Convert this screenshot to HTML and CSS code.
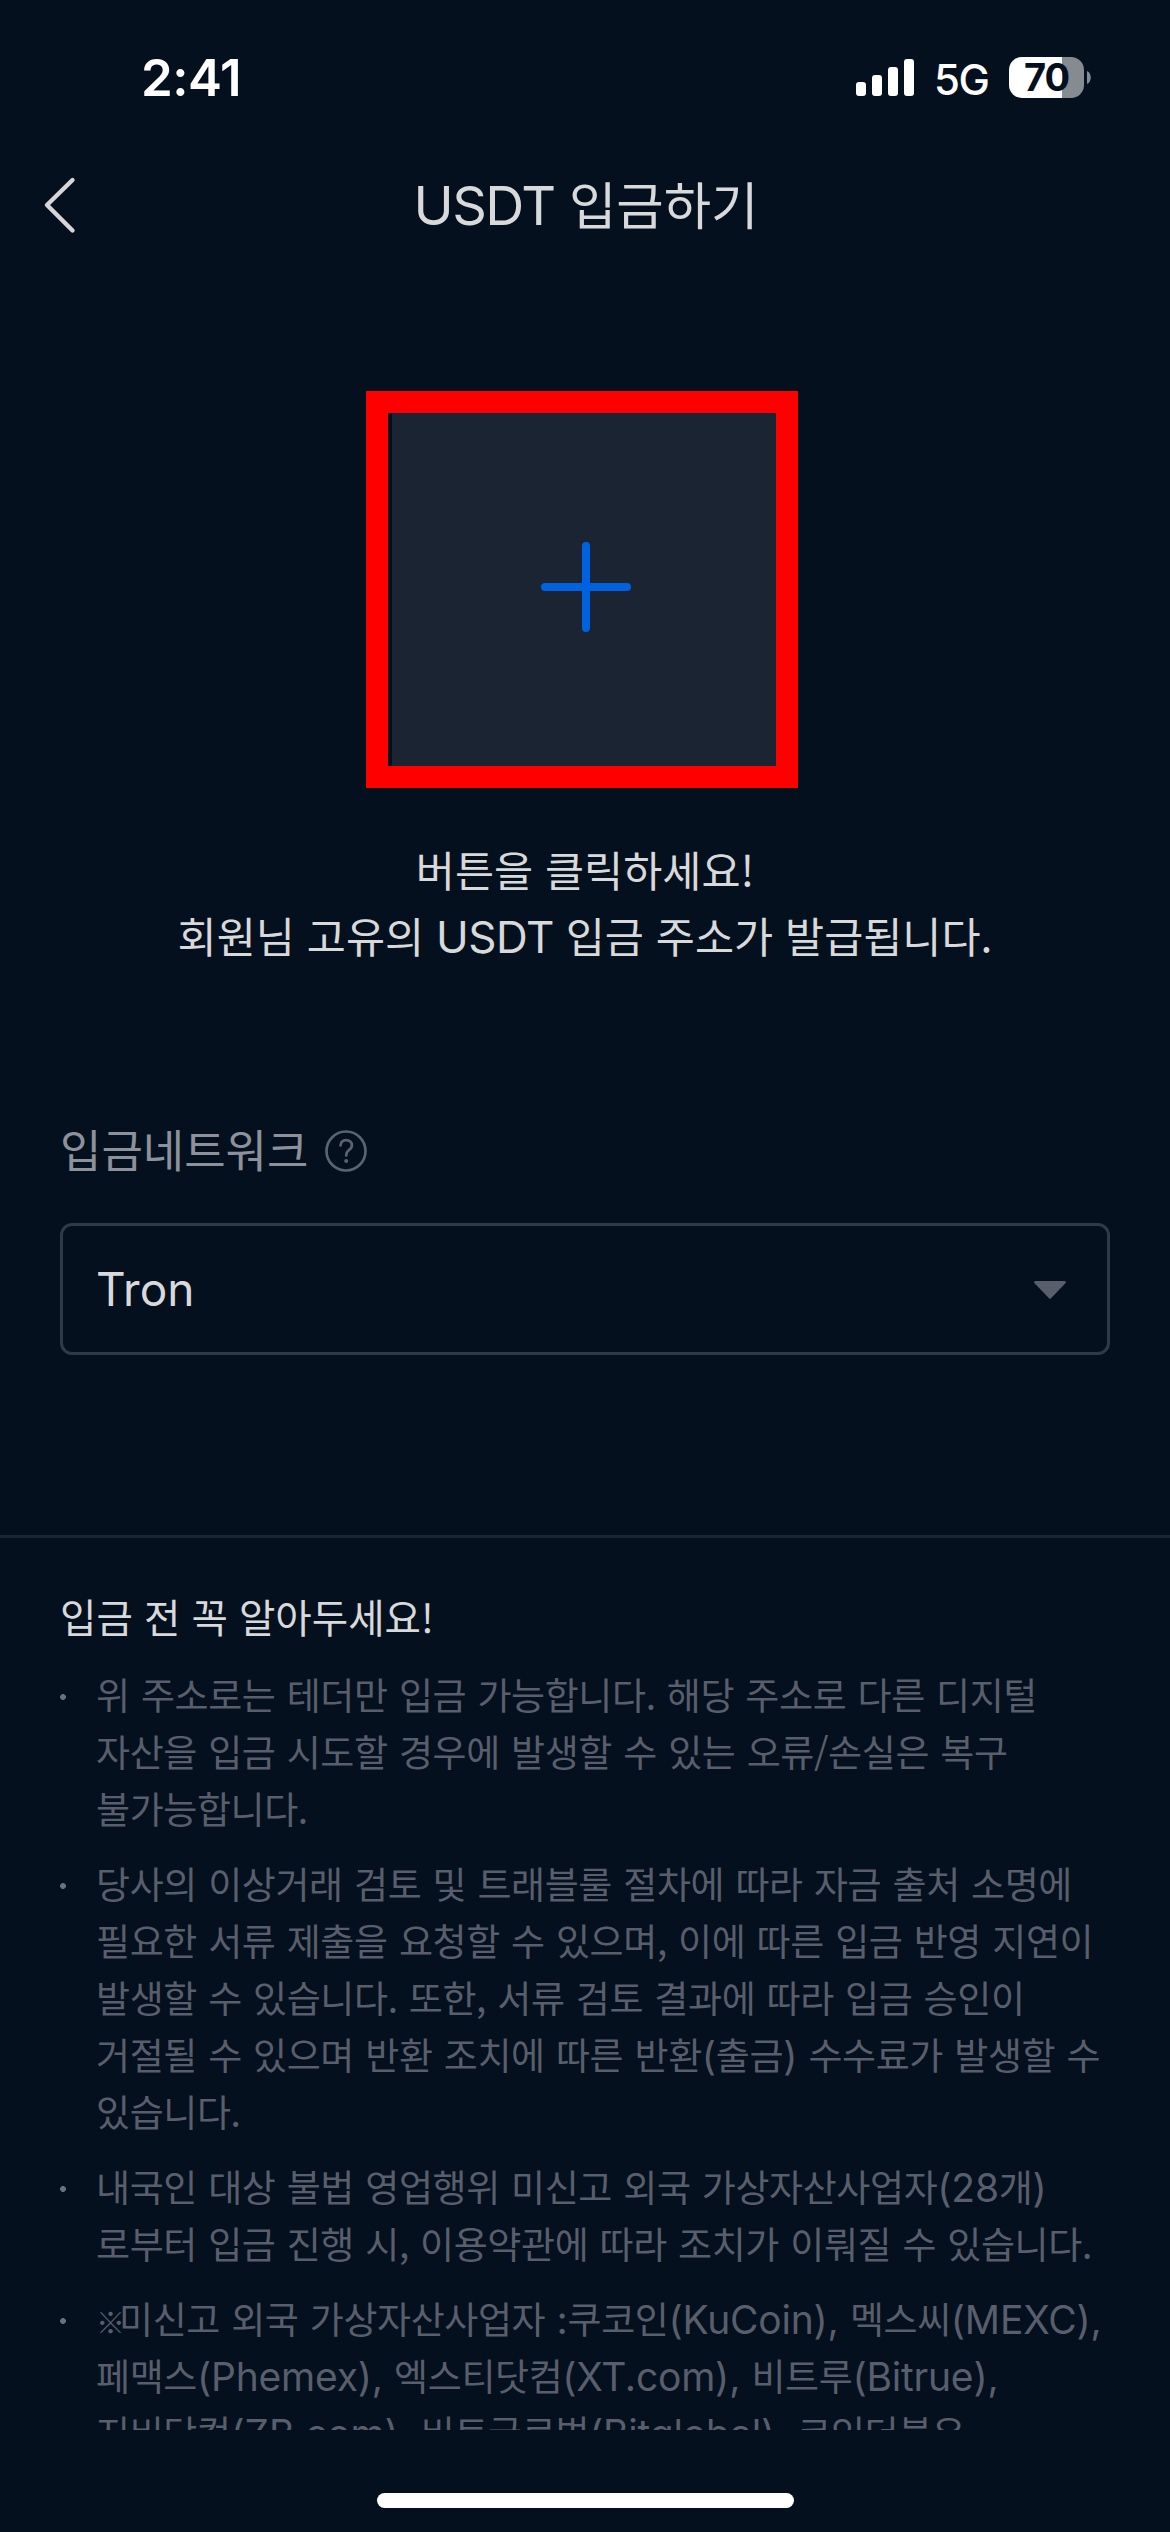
FILE: index.html
```html
<!DOCTYPE html>
<html lang="ko">
<head>
<meta charset="utf-8">
<title>USDT 입금하기</title>
<link rel="stylesheet" href="styles.css">
</head>
<body>
<div class="screen">
  <div class="status">
    <span class="time">2:41</span>
    <div class="status-right">
      <svg class="signal" width="58" height="37" viewBox="0 0 58 37" fill="#fff">
        <rect x="0" y="23" width="10" height="14" rx="3"/>
        <rect x="16" y="16" width="10" height="21" rx="3"/>
        <rect x="32" y="8" width="10" height="29" rx="3"/>
        <rect x="48" y="0" width="10" height="37" rx="3"/>
      </svg>
      <span class="network">5G</span>
      <div class="battery"><span class="battery-level">70</span></div>
      <svg class="battery-tip" width="4" height="13" viewBox="0 0 4 13"><path d="M0 0C5 2 5 11 0 13Z" fill="#868b92"/></svg>
    </div>
  </div>
  <header class="header">
    <svg class="back" width="36" height="60" viewBox="0 0 36 60" fill="none" stroke="#d6d6d8" stroke-width="4.4" stroke-linecap="round" stroke-linejoin="round"><path d="M30.500 5L5 30L30.500 55.500"/></svg>
    <h1 class="title"><span class="latin">USDT</span> 입금하기</h1>
  </header>
  <button class="create" type="button" aria-label="주소 발급">
    <svg width="90" height="90" viewBox="0 0 90 90" stroke="#0062e1" stroke-width="8" stroke-linecap="round"><path d="M45 4V86M4 45H86"/></svg>
  </button>
  <p class="guide">버튼을 클릭하세요!<br>회원님 고유의 <span class="latin">USDT</span> 입금 주소가 발급됩니다.</p>
  <section class="field">
    <div class="label">
      <span>입금네트워크</span>
      <svg width="42" height="42" viewBox="0 0 42 42" fill="none" stroke="#5b6270" stroke-width="2.700" stroke-linecap="round"><circle cx="21" cy="21" r="19.500"/><path d="M15.500 15.500C15.800 12 18 10.200 21.100 10.200C24.500 10.200 26.900 12.300 26.900 15.200C26.900 17.600 25.700 18.800 23.800 20.200C21.900 21.700 21.200 22.700 21.200 25.400"/><circle cx="21.200" cy="31" r="2" fill="#5b6270" stroke="none"/></svg>
    </div>
    <div class="select">
      <span>Tron</span>
      <svg class="caret" width="32" height="18" viewBox="0 0 32 18" fill="#585e6c"><path d="M1.500 0H30.500Q33 .5 31.200 2.500L17 17.200Q16 18.300 15 17.200L.8 2.500Q-1 .5 1.500 0Z"/></svg>
    </div>
  </section>
  <section class="notice">
    <h2 class="notice-title">입금 전 꼭 알아두세요!</h2>
    <ul class="notes">
      <li>위 주소로는 테더만 입금 가능합니다. 해당 주소로 다른 디지털<br>자산을 입금 시도할 경우에 발생할 수 있는 오류/손실은 복구<br>불가능합니다.</li>
      <li>당사의 이상거래 검토 및 트래블룰 절차에 따라 자금 출처 소명에<br>필요한 서류 제출을 요청할 수 있으며, 이에 따른 입금 반영 지연이<br>발생할 수 있습니다. 또한, 서류 검토 결과에 따라 입금 승인이<br>거절될 수 있으며 반환 조치에 따른 반환<span class="latin">(</span>출금<span class="latin">)</span> 수수료가 발생할 수<br>있습니다.</li>
      <li>내국인 대상 불법 영업행위 미신고 외국 가상자산사업자<span class="latin">(28</span>개<span class="latin">)</span><br>로부터 입금 진행 시, 이용약관에 따라 조치가 이뤄질 수 있습니다.</li>
      <li><span class="mark">※</span>미신고 외국 가상자산사업자 <span class="latin">:</span>쿠코인<span class="latin">(KuCoin),</span> 멕스씨<span class="latin">(MEXC),</span><br>페맥스<span class="latin">(Phemex),</span> 엑스티닷컴<span class="latin">(XT.com),</span> 비트루<span class="latin">(Bitrue),</span><br>지비닷컴<span class="latin">(ZB.com),</span> 비트글로벌<span class="latin">(Bitglobal),</span> 코인더블유</li>
    </ul>
  </section>
  <footer class="footer"><div class="home-bar"></div></footer>
</div>
</body>
</html>
```
FILE: styles.css
```css
* { box-sizing: border-box; margin: 0; padding: 0; }
body { background: #04101d; }
.screen {
  width: 1170px;
  height: 2532px;
  overflow: hidden;
  display: flex;
  flex-direction: column;
  background: #04101d;
  color: #d8d9db;
  font-family: "Noto Sans CJK KR", sans-serif;
  white-space: nowrap;
}
.latin { font-family: Inter, sans-serif; line-height: 0; }

.status {
  height: 156px;
  padding: 0 79px 0 141px;
  display: flex;
  justify-content: space-between;
  font-family: Inter, sans-serif;
  color: #fff;
}
.time { margin-top: 47px; font-size: 51px; line-height: 62px; font-weight: 600; letter-spacing: -.5px; }
.status-right { display: flex; align-items: flex-start; }
.signal { margin-top: 59px; }
.network { width: 56px; margin: 55px 19px 0 20px; font-size: 42px; line-height: 50px; font-weight: 500; letter-spacing: -1.5px; }
.battery {
  width: 75px;
  height: 41px;
  margin-top: 57px;
  border-radius: 13px;
  background: linear-gradient(90deg, #fff 53px, #868b92 53px);
  color: #04101d;
  text-align: center;
}
.battery-level { font-size: 38px; line-height: 41px; font-weight: 700; letter-spacing: -1px; }
.battery-tip { margin: 71px 0 0 3px; }

.header { height: 235px; display: grid; grid-template-columns: 120px 1fr 120px; align-items: start; }
.back { margin: 19px 0 0 42px; }
.title { padding-left: 2px; text-align: center; font-size: 51.5px; line-height: 80px; margin-top: 7px; font-weight: 400; }
.title .latin { font-size: 54px; letter-spacing: -1.5px; }

.create {
  width: 432px;
  height: 397px;
  margin-left: 366px;
  border: 22px solid #f00;
  background: linear-gradient(90deg, #04101d 4px, #1b2433 4px);
  display: flex;
  align-items: center;
  justify-content: center;
  padding: 0 0 5px 7px;
}
.guide { height: 280px; padding-top: 48px; text-align: center; font-size: 42.5px; line-height: 66px; }
.guide .latin { font-size: 44px; letter-spacing: -.5px; }

.field { height: 467px; padding: 49px 60px 0; }
.label { height: 106px; display: flex; align-items: flex-start; gap: 17px; color: #8d919b; font-size: 45px; line-height: 64px; }
.label svg { margin-top: 13px; }
.select {
  height: 132px;
  padding: 0 41px 0 33px;
  border: 3px solid #2f3948;
  border-radius: 12px;
  display: flex;
  align-items: center;
  justify-content: space-between;
  font-family: Inter, sans-serif;
  font-size: 46px;
}
.caret { margin-top: 2px; }

.notice { height: 895px; padding: 48px 60px 0; border-top: 3px solid #1b2431; overflow: hidden; }
.notice-title { height: 80px; font-size: 39.6px; line-height: 59px; font-weight: 400; }
.notes {
  list-style: none;
  display: flex;
  flex-direction: column;
  gap: 18px;
  color: #585e6b;
  font-size: 37px;
  line-height: 57px;
  letter-spacing: -.4px;
  word-spacing: 1.3px;
}
.notes li { padding-left: 36px; background: radial-gradient(circle 3px at 3px 31px, #6a707c 2.600px, transparent 3.200px); }
.notes .latin { font-size: 39px; letter-spacing: -.2px; }
.mark { font-size: 29px; line-height: 0; font-weight: 700; letter-spacing: -6px; }

.footer { flex: 1; padding-top: 63px; }
.home-bar { width: 417px; height: 15px; margin-left: 377px; border-radius: 8px; background: #fff; }
```
